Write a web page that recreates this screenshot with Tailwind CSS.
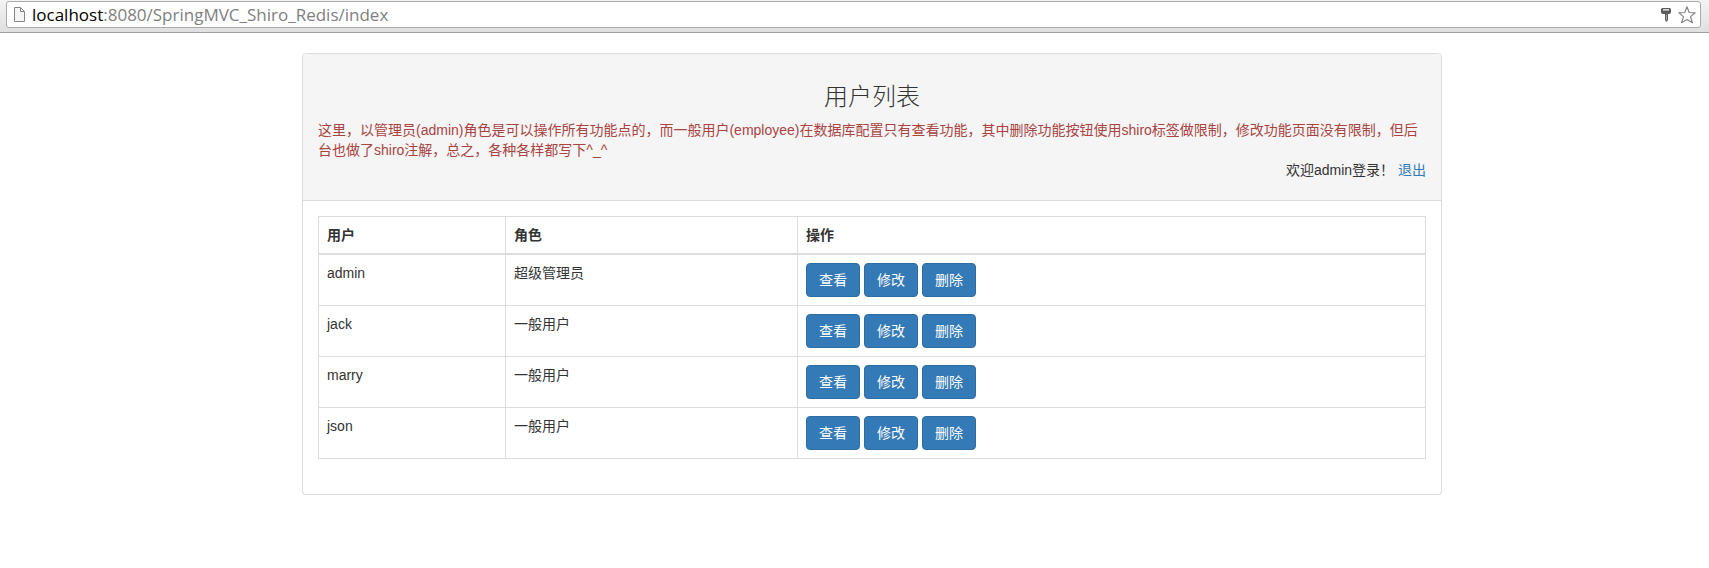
<!DOCTYPE html>
<html lang="zh-CN">
<head>
<meta charset="utf-8">
<meta name="viewport" content="width=device-width, initial-scale=1">
<title>用户列表</title>
<script src="https://cdn.jsdelivr.net/npm/@tailwindcss/browser@4"></script>
</head>
<body class="bg-white font-['Liberation_Sans','Noto_Sans_CJK_SC',sans-serif] text-sm leading-5 text-[#333]">
<!-- Address bar -->
<header class="border-b border-[#a0a0a0] bg-linear-to-b from-[#f4f4f4] to-[#dfdfdf] px-1.5 pt-px pb-1">
  <div class="mr-0.5 flex h-[27px] items-center rounded-[3px] border border-[#aaa] bg-white pr-1 pl-1.5">
    <svg class="h-4 w-[13px] shrink-0" viewBox="0 0 13 16" fill="#f6f6f6" stroke="#858585" aria-hidden="true"><path d="M1.5 .5h6l4 4v10h-10zM7.5 .5v4h4"/></svg>
    <div role="textbox" contenteditable="true" spellcheck="false" aria-label="地址" class="ml-1.5 grow font-['Open_Sans',sans-serif] text-[17px] leading-6 whitespace-nowrap text-[#808080] outline-none"><span class="text-black">localhost</span>:8080/SpringMVC_Shiro_Redis/index</div>
    <button type="button" aria-label="密码" class="mr-[7px] shrink-0"><svg class="block h-4 w-2.5" viewBox="0 0 10 16"><path fill="#5c5c5c" fill-rule="evenodd" d="M1.500 1h7q1.500 0 1.500 1.500V5q0 2-2 2H7v6l-1 1.500H5L4 13V7H2Q0 7 0 5V2.500Q0 1 1.500 1zM2 2.200v1.300h6V2.200z"/><path stroke="#aaa" d="M5.500 7.500V13"/></svg></button>
    <button type="button" aria-label="收藏" class="shrink-0"><svg class="block size-[18px]" viewBox="0 0 18 18" fill="#fff" stroke="#858585" stroke-width="1.200" stroke-linejoin="round"><path d="M9 .8l2.200 5.700 6 .3-4.700 3.800 1.900 6.100L9 13.600l-5.400 3.100 1.900-6.100L.8 6.800l6-.3z"/></svg></button>
  </div>
</header>

<main class="pt-5 pl-[35px]">
  <section class="mx-auto max-w-[1140px] rounded border border-[#ddd] bg-white shadow-[0_1px_1px_rgba(0,0,0,.05)]">
    <div class="rounded-t-[3px] border-b border-[#ddd] bg-[#f5f5f5] px-[15px] pt-7 pb-5">
      <h3 class="mb-3 text-center font-['Noto_Sans_CJK_SC',sans-serif] text-2xl leading-[26px] font-light">用户列表</h3>
      <p class="text-[#a94442]">这里，以管理员(admin)角色是可以操作所有功能点的，而一般用户(employee)在数据库配置只有查看功能，其中删除功能按钮使用shiro标签做限制，修改功能页面没有限制，但后台也做了shiro注解，总之，各种各样都写下^_^</p>
      <p class="text-right">欢迎admin登录！ <a href="#" class="text-[#337ab7]">退出</a></p>
    </div>
    <div class="px-[15px] pt-[15px] pb-[35px]">
      <table class="w-full table-fixed border-collapse border border-[#ddd] [&_td]:border [&_td]:border-[#ddd] [&_td]:p-2 [&_td]:align-top [&_th]:border [&_th]:border-b-2 [&_th]:border-[#ddd] [&_th]:p-2 [&_th]:text-left">
        <colgroup><col class="w-[187px]"><col class="w-[292px]"><col></colgroup>
        <thead><tr><th scope="col">用户</th><th scope="col">角色</th><th scope="col">操作</th></tr></thead>
        <tbody class="[&_button]:rounded [&_button]:border [&_button]:border-[#2e6da4] [&_button]:bg-[#337ab7] [&_button]:px-3 [&_button]:py-1.5 [&_button]:text-white">
          <tr><td>admin</td><td>超级管理员</td><td><div class="flex gap-1"><button type="button">查看</button><button type="button">修改</button><button type="button">删除</button></div></td></tr>
          <tr><td>jack</td><td>一般用户</td><td><div class="flex gap-1"><button type="button">查看</button><button type="button">修改</button><button type="button">删除</button></div></td></tr>
          <tr><td>marry</td><td>一般用户</td><td><div class="flex gap-1"><button type="button">查看</button><button type="button">修改</button><button type="button">删除</button></div></td></tr>
          <tr><td>json</td><td>一般用户</td><td><div class="flex gap-1"><button type="button">查看</button><button type="button">修改</button><button type="button">删除</button></div></td></tr>
        </tbody>
      </table>
    </div>
  </section>
</main>
</body>
</html>
